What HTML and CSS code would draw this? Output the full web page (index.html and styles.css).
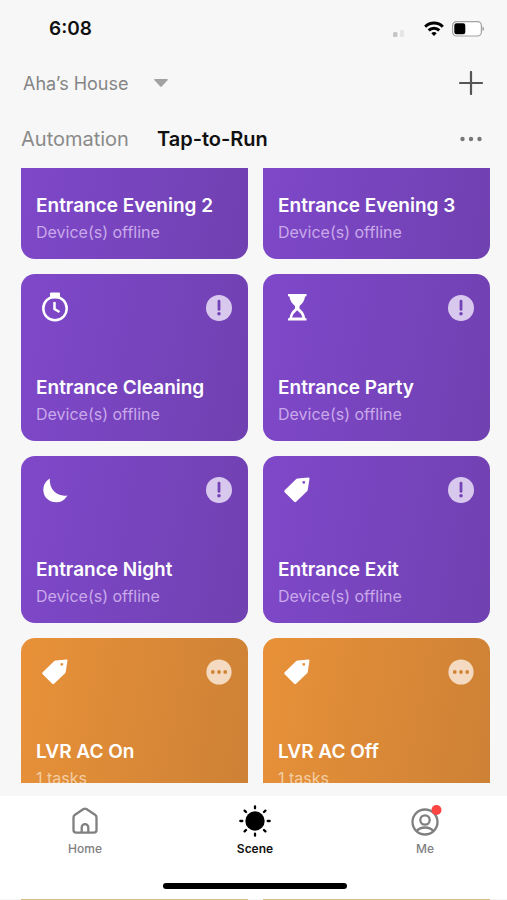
FILE: index.html
```html
<!DOCTYPE html>
<html lang="en">
<head>
<meta charset="utf-8">
<meta name="viewport" content="width=device-width, initial-scale=1">
<title>Scenes</title>
<link rel="stylesheet" href="styles.css">
</head>
<body>
<svg class="sprite" aria-hidden="true">
  <symbol id="tag" viewBox="0 0 26 26"><path fill="currentColor" fill-rule="evenodd" d="M13.600 1.500 24.500.5Q25.500.5 25.500 1.500L23.800 12.500Q23.600 13.800 22.800 14.600L12.100 24.800Q11.100 25.600 10.200 24.800L.7 15.300Q-.2 14.300.7 13.300L12 2.300Q12.700 1.600 13.600 1.500ZM19.800 3.900a1.400 1.400 0 1 0 .01 0Z"/></symbol>
  <symbol id="alert" viewBox="0 0 26 26"><circle cx="13" cy="13" r="13" fill="#d9c8ee"/><path d="M13 6.200v8.200" stroke="#7344b5" stroke-width="2.800" stroke-linecap="round"/><circle cx="13" cy="18.800" r="1.800" fill="#7344b5"/></symbol>
  <symbol id="more" viewBox="0 0 26 26"><circle cx="13" cy="13" r="12.600" fill="#f3dac0"/><g fill="#d18435"><circle cx="6.800" cy="13" r="1.900"/><circle cx="13" cy="13" r="1.900"/><circle cx="19.200" cy="13" r="1.900"/></g></symbol>
</svg>
<div class="app">
  <div class="status">
    <span class="time">6:08</span>
    <span class="indicators">
      <svg class="signal" viewBox="0 0 12 8"><rect x="0" y="3" width="4.500" height="5" rx="1.500" fill="#c6c6c6"/><rect x="7" y="1" width="4" height="7" rx="1" fill="#e6e6e6"/></svg>
      <svg class="wifi" viewBox="0 0 20 15"><g fill="none" stroke="#000" stroke-width="3"><path d="M1.200 5.700a12.500 12.500 0 0 1 17.600 0"/><path d="M4.700 9.400a7.600 7.600 0 0 1 10.600 0"/></g><path d="M10 15 7.300 12.200a3.900 3.900 0 0 1 5.400 0Z"/></svg>
      <svg class="battery" viewBox="0 0 32 16"><rect x=".6" y=".6" width="28.800" height="14.400" rx="4" fill="#fff" stroke="#a3a3a3" stroke-width="1.200"/><rect x="2.300" y="2.300" width="11" height="11" rx="2.200"/><path d="M30.500 5.500q1.500.5 1.500 2.300t-1.500 2.300Z" fill="#999"/></svg>
    </span>
  </div>
  <header class="header">
    <button class="house" type="button">Aha’s House <svg class="caret" viewBox="0 0 14 8"><path d="M1 0h12q1.300.2.500 1.200L8 7.200q-1 1-2 0L.5 1.200Q-.3.200 1 0Z" fill="#a2a2a2"/></svg></button>
    <button class="icon-button" type="button" aria-label="Add scene"><svg class="plus" viewBox="0 0 24 24"><path d="M12 1v22M1 12h22" stroke="#555" stroke-width="2.200" stroke-linecap="round"/></svg></button>
  </header>
  <nav class="tabs">
    <a class="tab" href="#automation">Automation</a>
    <a class="tab active" href="#run" aria-current="page">Tap-to-Run</a>
    <button class="icon-button" type="button" aria-label="More options"><svg class="dots" viewBox="0 0 24 6"><g fill="#777"><circle cx="3.500" cy="3" r="2.200"/><circle cx="12" cy="3" r="2.200"/><circle cx="20.500" cy="3" r="2.200"/></g></svg></button>
  </nav>
  <main class="list">
    <div class="grid">
      <article class="card"><div class="card-top"></div><h2>Entrance Evening 2</h2><p>Device(s) offline</p></article>
      <article class="card"><div class="card-top"></div><h2>Entrance Evening 3</h2><p>Device(s) offline</p></article>
      <article class="card">
        <div class="card-top"><svg class="glyph" viewBox="0 0 28 30"><g fill="none" stroke="#fff"><circle cx="14" cy="16.500" r="11.700" stroke-width="2.500"/><path d="M13.500 10v7l5 3" stroke-width="2.500"/></g><path d="M9.500 1h9v5h-9Z" fill="#fff" stroke="#fff" stroke-linejoin="round"/></svg><svg class="badge"><use href="#alert"/></svg></div>
        <h2>Entrance Cleaning</h2><p>Device(s) offline</p>
      </article>
      <article class="card">
        <div class="card-top"><svg class="glyph" viewBox="0 0 28 30"><path fill="#fff" fill-rule="evenodd" d="M5 2h18.500v2l-1.500.8q-.5 5-5.500 9.200v2.500q5 4 5.700 9.500l1.300.6v2H5v-2l1.500-.6Q7.200 20.500 12 16.500V14Q7 9.800 6.500 4.800L5 4ZM14.200 18.200Q10 21.500 9 25.400h10.500Q18.500 21.500 14.200 18.200Z"/></svg><svg class="badge"><use href="#alert"/></svg></div>
        <h2>Entrance Party</h2><p>Device(s) offline</p>
      </article>
      <article class="card">
        <div class="card-top"><svg class="glyph" viewBox="0 0 28 30"><path fill="#fff" d="M8.800 4.600Q8.300 12.500 13.200 17.600 18.500 22.700 26.500 21.400 22 28.300 15.500 28.300 9 28.200 5.200 24 1.500 19.500 2.500 13.500 3.700 7.500 8.800 4.600Z"/></svg><svg class="badge"><use href="#alert"/></svg></div>
        <h2>Entrance Night</h2><p>Device(s) offline</p>
      </article>
      <article class="card">
        <div class="card-top"><svg class="glyph tag"><use href="#tag"/></svg><svg class="badge"><use href="#alert"/></svg></div>
        <h2>Entrance Exit</h2><p>Device(s) offline</p>
      </article>
      <article class="card orange">
        <div class="card-top"><svg class="glyph tag"><use href="#tag"/></svg><svg class="badge"><use href="#more"/></svg></div>
        <h2>LVR AC On</h2><p>1 tasks</p>
      </article>
      <article class="card orange">
        <div class="card-top"><svg class="glyph tag"><use href="#tag"/></svg><svg class="badge"><use href="#more"/></svg></div>
        <h2>LVR AC Off</h2><p>1 tasks</p>
      </article>
    </div>
  </main>
  <nav class="bottom">
    <a class="item" href="#home"><svg viewBox="0 0 32 32"><g fill="none" stroke="#808080" stroke-width="2.300" stroke-linejoin="round"><path d="M14.600 4q1.400-.8 2.800 0l8.600 5.700q1.500 1 1.500 2.800V25q0 2.600-2.600 2.600H7.100Q4.500 27.600 4.500 25V12.500q0-1.800 1.500-2.800Z"/><path d="M12.700 27.500v-5a3.300 3.300 0 0 1 6.600 0v5"/></g></svg>Home</a>
    <a class="item active" href="#scene" aria-current="page"><svg viewBox="0 0 32 32"><circle cx="16" cy="16" r="9.700"/><path d="M16 1.300v2M16 28.700v2M1.300 16h2M28.700 16h2M5.600 5.600 7 7M25 25l1.400 1.400M5.600 26.400 7 25M25 7l1.400-1.400" stroke="#000" stroke-width="2.300" stroke-linecap="round"/></svg>Scene</a>
    <a class="item" href="#me"><svg viewBox="0 0 32 32"><g fill="none" stroke="#808080" stroke-width="2.300"><circle cx="16" cy="17" r="12.500"/><circle cx="16" cy="15" r="4.700"/><path d="M7.500 26q3.300-3.500 8.500-3.500t8.500 3.500"/></g><circle cx="27.500" cy="5" r="5" fill="#ff4444"/></svg>Me</a>
  </nav>
  <div class="home-area"><span class="home-bar"></span></div>
  <div class="peek"><span></span><span></span></div>
</div>
</body>
</html>
```
FILE: styles.css
```css
* { box-sizing: border-box; }
body { margin: 0; background: #f7f7f7; font-family: Inter, "Liberation Sans", sans-serif; color: #111; }
button { border: 0; padding: 0; background: none; font: inherit; color: inherit; }
a { color: inherit; text-decoration: none; }
svg { display: block; }
.sprite { display: none; }
.app { display: flex; flex-direction: column; height: 100vh; overflow: hidden; }

.status { display: flex; justify-content: space-between; align-items: center; height: 57px; padding: 0 23px 0 49px; }
.time { font-size: 19px; font-weight: 600; }
.indicators { display: flex; align-items: center; }
.signal { width: 12px; height: 8px; margin: 8px 19px 0 0; }
.wifi { width: 20px; height: 15px; margin-right: 8px; }
.battery { width: 32px; height: 16px; }

.header { display: flex; justify-content: space-between; align-items: center; height: 52px; padding: 0 24px 0 23px; color: #858585; }
.house { display: flex; align-items: center; gap: 25px; font-size: 18px; }
.caret { width: 14px; height: 8px; }
.plus { width: 24px; height: 24px; }

.tabs { display: flex; align-items: center; gap: 28px; height: 59px; padding: 0 24px 0 21px; font-size: 20px; color: #8a8a8a; }
.tabs .active { color: #111; font-weight: 600; }
.tabs .icon-button { margin-left: auto; }
.dots { width: 24px; height: 6px; }

.list { flex: 1; min-height: 0; overflow: hidden; padding: 0 17px 0 21px; }
.grid { display: grid; grid-template-columns: 1fr 1fr; gap: 15px; margin-top: -76px; }
.card { height: 167px; padding: 20px 16px 16px 15px; border-radius: 14px; color: #fff; background: linear-gradient(100deg, #7f48ca, #7041b1); }
.orange { background: linear-gradient(100deg, #e89139, #cd8135); }
.card-top { display: flex; justify-content: space-between; height: 80px; }
.glyph { width: 28px; height: 30px; margin: -2px 0 0 5px; }
.glyph.tag { width: 26px; height: 26px; margin: 1px 0 0 6px; }
.badge { width: 26px; height: 26px; margin-top: 1px; }
.card h2 { margin: 0; font-size: 19px; line-height: 28px; font-weight: 600; white-space: nowrap; }
.card p { margin: 0; font-size: 16px; line-height: 24px; color: #c9a9ea; }
.orange p { color: #f4cda2; }

.bottom { display: grid; grid-template-columns: 1fr 1fr 1fr; height: 78px; margin: 13px -3px 0 0; padding-top: 9px; background: #fff; }
.item { display: flex; flex-direction: column; align-items: center; gap: 4px; font-size: 12px; line-height: 16px; font-weight: 500; color: #808080; }
.item.active { color: #111; font-weight: 600; }
.item svg { width: 32px; height: 32px; overflow: visible; }
.home-area { display: flex; justify-content: center; height: 25px; margin-right: -3px; padding-top: 9px; background: #fff; }
.home-bar { width: 36%; height: 6px; border-radius: 3px; background: #000; }
.peek { display: grid; grid-template-columns: 1fr 1fr; gap: 15px; height: 1px; padding: 0 17px 0 21px; }
.peek span { background: #d3bd84; }
```
